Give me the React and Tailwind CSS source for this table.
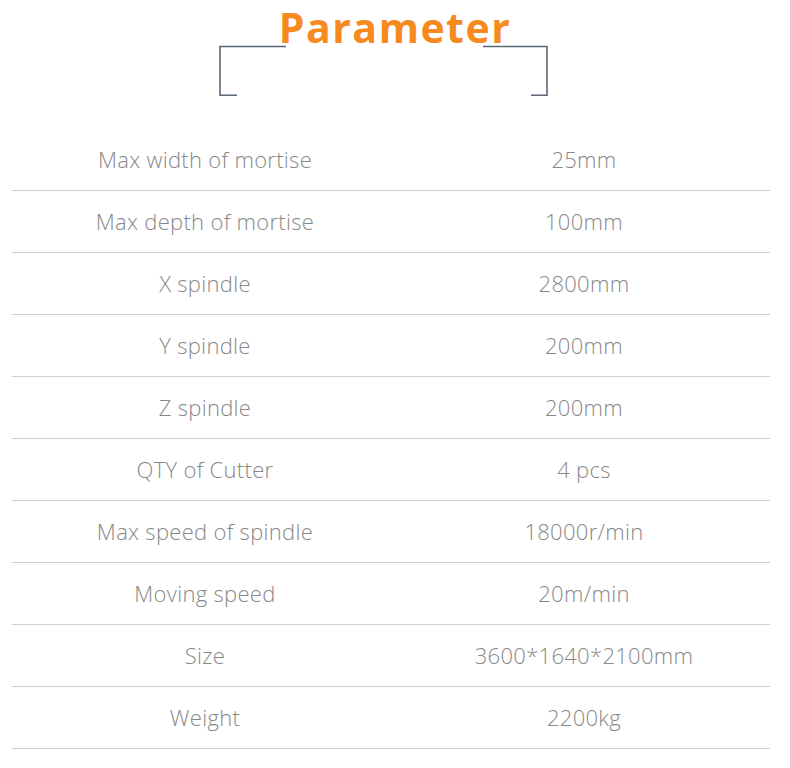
import React from "react";

const rows = [
  ["Max width of mortise", "25mm"],
  ["Max depth of mortise", "100mm"],
  ["X spindle", "2800mm"],
  ["Y spindle", "200mm"],
  ["Z spindle", "200mm"],
  ["QTY of Cutter", "4 pcs"],
  ["Max speed of spindle", "18000r/min"],
  ["Moving speed", "20m/min"],
  ["Size", "3600*1640*2100mm"],
  ["Weight", "2200kg"],
];

export default function App() {
  return (
    <div className="w-[790px] h-[768px] bg-white overflow-hidden" style={{ fontFamily: "'Open Sans', sans-serif" }}>
      <div className="relative w-full h-[129px]">
        <svg className="absolute left-[219px] top-0" width="332" height="100" viewBox="0 0 332 100">
          <g fill="none" stroke="#5b6775" strokeWidth="1.6">
            <path d="M67 46.5 H1 V95.2 H18" />
            <path d="M264 46.5 H328 V95.2 H312" />
          </g>
        </svg>
        <h1 className="relative pt-[1px] text-center text-[41px] leading-[52px] font-bold tracking-[1.5px] text-[#f68a1e]">
          Parameter
        </h1>
      </div>
      <div className="ml-[12px] w-[758px]">
        {rows.map(([k, v]) => (
          <div key={k} className="grid grid-cols-[386px_372px] h-[62px] items-center border-b border-[#cfcfcf] text-[22px] tracking-[0.3px] font-light text-[#888888]">
            <div className="text-center">{k}</div>
            <div className="text-center">{v}</div>
          </div>
        ))}
      </div>
    </div>
  );
}
